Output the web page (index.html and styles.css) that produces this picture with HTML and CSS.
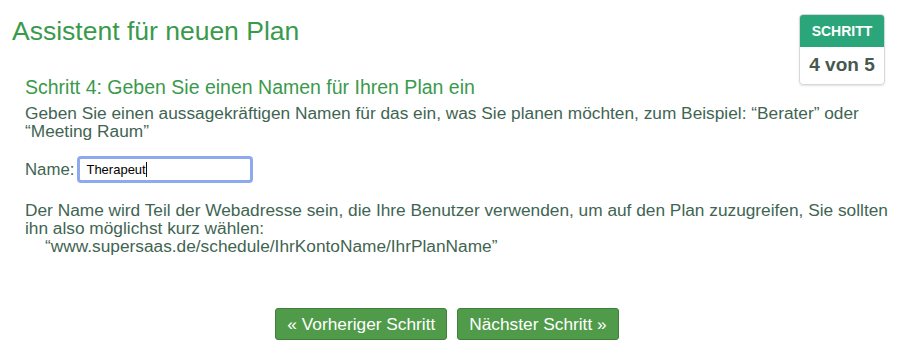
FILE: index.html
```html
<!DOCTYPE html>
<html lang="de">
<head>
<meta charset="utf-8">
<title>Assistent für neuen Plan</title>
<link rel="stylesheet" href="styles.css">
</head>
<body>
<div class="page">
  <div class="header">
    <h1 class="title">Assistent für neuen Plan</h1>
    <div class="badge">
      <div class="badge-top">SCHRITT</div>
      <div class="badge-body">4 von 5</div>
    </div>
  </div>
  <div class="content">
    <h2 class="step">Schritt 4: Geben Sie einen Namen für Ihren Plan ein</h2>
    <p class="text">Geben Sie einen aussagekräftigen Namen für das ein, was Sie planen möchten, zum Beispiel: “Berater” oder “Meeting Raum”</p>
    <div class="field">
      <label class="label" for="name">Name:</label>
      <div class="input" id="name"><span>Therapeut</span><span class="caret"></span></div>
    </div>
    <p class="text note">Der Name wird Teil der Webadresse sein, die Ihre Benutzer verwenden, um auf den Plan zuzugreifen, Sie sollten ihn also möglichst kurz wählen:<br><span class="url">“www.supersaas.de/schedule/IhrKontoName/IhrPlanName”</span></p>
    <div class="buttons">
      <button class="btn">« Vorheriger Schritt</button>
      <button class="btn">Nächster Schritt »</button>
    </div>
  </div>
</div>
</body>
</html>
```
FILE: styles.css
```css
html, body {
  margin: 0;
  padding: 0;
  background: #ffffff;
}
body {
  font-family: "Liberation Sans", Arial, sans-serif;
  color: #3f6552;
}
.page {
  padding: 14px 15px 0 12px;
}
.header {
  display: flex;
  justify-content: space-between;
  align-items: flex-start;
}
.title {
  margin: 0;
  padding-top: 2px;
  font-size: 26.5px;
  font-weight: normal;
  color: #3a9a4c;
  line-height: 30px;
}
.badge {
  width: 84px;
  border: 1px solid #d6d9d7;
  border-radius: 4px;
  overflow: hidden;
  box-shadow: 0 1px 2px rgba(0,0,0,0.12);
  text-align: center;
}
.badge-top {
  background: #2aa67a;
  color: #ffffff;
  font-weight: bold;
  font-size: 14px;
  height: 32px;
  line-height: 32px;
}
.badge-body {
  color: #46594f;
  font-weight: bold;
  font-size: 19px;
  height: 37px;
  line-height: 36px;
}
.content {
  padding-left: 13px;
  margin-top: -9px;
  margin-right: -5px;
}
.step {
  margin: 0 0 6px;
  font-size: 19.5px;
  font-weight: normal;
  color: #3a9a4c;
  line-height: 22px;
}
.text {
  margin: 0;
  font-size: 17.3px;
  line-height: 18px;
}
.url {
  padding-left: 20px;
}
.field {
  display: flex;
  align-items: center;
  gap: 3px;
  margin: 16px 0 18px;
}
.label {
  font-size: 16.8px;
}
.input {
  box-sizing: border-box;
  width: 176px;
  height: 27px;
  border: 3px solid #8fa9ee;
  border-radius: 4px;
  display: flex;
  align-items: center;
  padding-left: 6px;
  font-size: 13px;
  color: #000000;
  font-family: "Liberation Sans", Arial, sans-serif;
}
.caret {
  display: inline-block;
  width: 1px;
  height: 15px;
  background: #111111;
}
.buttons {
  display: flex;
  justify-content: center;
  gap: 10px;
  margin-top: 53px;
  padding-right: 21px;
}
.btn {
  font-family: "Liberation Sans", Arial, sans-serif;
  font-size: 17.3px;
  color: #ffffff;
  background: #509b49;
  border: 1px solid #3f7f3a;
  border-radius: 3px;
  height: 32px;
  padding: 0 11px;
  line-height: 30px;
}
```
